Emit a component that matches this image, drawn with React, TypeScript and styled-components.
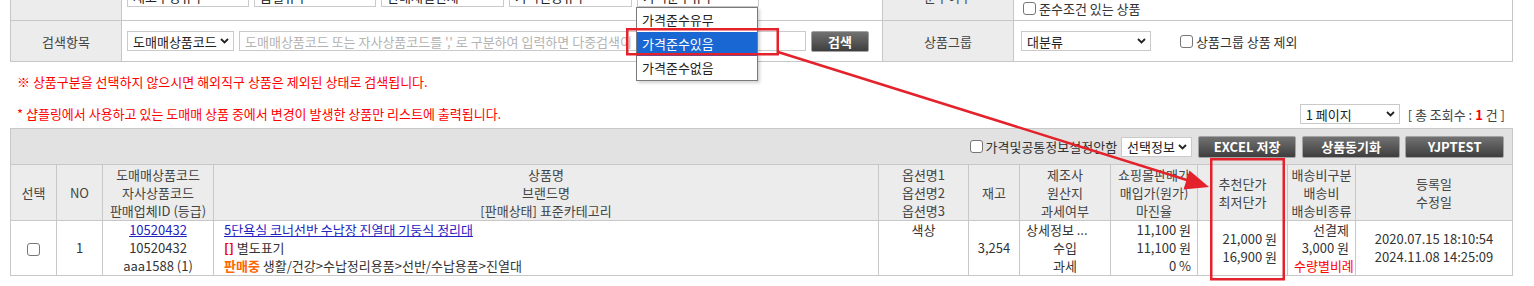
import React from 'react';
import styled, { createGlobalStyle } from 'styled-components';

const GlobalStyle = createGlobalStyle`
  html, body {
    margin: 0;
    padding: 0;
    background: #fff;
  }
  body {
    width: 1534px;
    height: 286px;
    overflow: hidden;
    font-family: 'Noto Sans CJK KR', 'Noto Sans', sans-serif;
    font-size: 13px;
    color: #333;
  }
`;

const Viewport = styled.div`
  position: relative;
  width: 1534px;
  height: 286px;
  overflow: hidden;
`;

const Sheet = styled.div`
  width: 1502px;
  margin: -28px 0 0 10px;
`;

// 검색 조건 테이블
const SearchTable = styled.table`
  width: 1502px;
  border-collapse: collapse;
  table-layout: fixed;
`;

const SizedRow = styled.tr<{ $h: number }>`
  height: ${p => p.$h}px;
`;

const LabelCell = styled.th`
  padding: 0;
  background: #ececec;
  border: 1px solid #c6c6c6;
  font-weight: 400;
  color: #444;
  text-align: center;
`;

const FieldCell = styled.td<{ $pl?: number }>`
  padding: 0 0 0 ${p => p.$pl ?? 5}px;
  border: 1px solid #c6c6c6;
`;

const FieldRow = styled.div<{ $gap: number }>`
  display: flex;
  align-items: center;
  gap: ${p => p.$gap}px;
`;

const FieldStack = styled.div`
  display: flex;
  flex-direction: column;
  gap: 4px;
`;

const SelectBox = styled.div<{ $w: number }>`
  box-sizing: border-box;
  display: flex;
  align-items: center;
  justify-content: space-between;
  gap: 2px;
  width: ${p => p.$w}px;
  height: 20px;
  padding: 0 4px 0 5px;
  border: 1px solid #cacaca;
  background: #fff;
  color: #222;
  white-space: nowrap;
  flex-shrink: 0;
`;

const SelectText = styled.span`
  overflow: hidden;
  min-width: 0;
`;

const ChevronIcon = styled.svg`
  flex-shrink: 0;
`;

const TextInput = styled.input<{ $w: number }>`
  box-sizing: border-box;
  width: ${p => p.$w}px;
  height: 20px;
  margin: 0;
  padding: 0 5px;
  border: 1px solid #cacaca;
  font-family: inherit;
  font-size: 13px;
  color: #333;
  outline: none;
  &::placeholder {
    color: #b3b3b3;
  }
`;

const DarkButton = styled.button<{ $w: number; $h: number }>`
  box-sizing: border-box;
  width: ${p => p.$w}px;
  height: ${p => p.$h}px;
  padding: 0;
  border: 1px solid #a3a3a3;
  border-radius: 2px;
  background: linear-gradient(#727272, #3e3e3e);
  color: #fff;
  font-family: inherit;
  font-size: 13px;
  font-weight: 700;
  flex-shrink: 0;
`;

const Checkbox = styled.input.attrs({ type: 'checkbox' })`
  appearance: none;
  box-sizing: border-box;
  width: 13px;
  height: 13px;
  margin: 0;
  border: 1px solid #767676;
  border-radius: 3px;
  background: #fff;
  flex-shrink: 0;
  vertical-align: middle;
`;

const CheckLabel = styled.label`
  display: inline-flex;
  align-items: center;
  gap: 3px;
  white-space: nowrap;
  color: #333;
`;

// 드롭다운 (열린 상태)
const OptionList = styled.ul`
  position: absolute;
  top: 7px;
  left: 636px;
  z-index: 5;
  box-sizing: border-box;
  width: 122px;
  margin: 0;
  padding: 0;
  list-style: none;
  background: #fff;
  border: 1px solid #7a7a7a;
  box-shadow: 2px 2px 3px rgba(0, 0, 0, 0.18);
`;

const OptionItem = styled.li<{ $active?: boolean }>`
  height: 24px;
  line-height: 24px;
  padding-left: 5px;
  background: ${p => (p.$active ? '#1967d2' : '#fff')};
  color: ${p => (p.$active ? '#fff' : '#222')};
`;

// 안내 문구
const Notice = styled.div`
  padding-left: 7px;
  line-height: 18px;
  color: #f00;
`;

const NoticeBlock = styled.div`
  margin-top: 11px;
`;

const ListHeader = styled.div`
  display: flex;
  align-items: center;
  justify-content: space-between;
  height: 20px;
  margin-top: 13px;
  padding-right: 7px;
`;

const PageInfo = styled.div`
  display: flex;
  align-items: center;
  gap: 8px;
`;

const TotalText = styled.span`
  color: #444;
  white-space: nowrap;
`;

const RedNum = styled.b`
  color: #f00;
`;

// 상품 리스트 테이블
const ListTable = styled.table`
  width: 1502px;
  margin-top: 4px;
  border-collapse: collapse;
  table-layout: fixed;
`;

const ToolbarCell = styled.td`
  height: 35px;
  padding: 0 8px 0 0;
  background: #e2e2e2;
  border: 1px solid #c8c8c8;
`;

const Toolbar = styled.div`
  display: flex;
  align-items: center;
  justify-content: flex-end;
`;

const ToolGap = styled.span<{ $w: number }>`
  display: inline-block;
  width: ${p => p.$w}px;
`;

const HeadCell = styled.th`
  height: 55px;
  padding: 0 2px;
  background: #ececec;
  border: 1px solid #c8c8c8;
  font-weight: 400;
  color: #444;
  line-height: 18px;
  text-align: center;
  white-space: nowrap;
`;

const BodyCell = styled.td<{ $align?: 'left' | 'center' | 'right'; $pl?: number; $pr?: number; $valign?: string }>`
  height: 54px;
  padding: 0 ${p => p.$pr ?? 6}px 0 ${p => p.$pl ?? 6}px;
  border: 1px solid #c8c8c8;
  line-height: 18px;
  text-align: ${p => p.$align ?? 'center'};
  vertical-align: ${p => p.$valign ?? 'middle'};
  white-space: nowrap;
  overflow: hidden;
  color: #333;
`;

const Line = styled.div<{ $align?: string }>`
  min-height: 18px;
  text-align: ${p => p.$align ?? 'inherit'};
`;

const ItemLink = styled.a`
  color: #2323c2;
  text-decoration: underline;
`;

const Bracket = styled.b`
  color: #e00;
`;

const StatusText = styled.b`
  color: #f60;
`;

const RedText = styled.span`
  color: #f00;
`;

const Annotation = styled.svg`
  position: absolute;
  top: 0;
  left: 0;
  z-index: 10;
  pointer-events: none;
`;

const Chevron = () => (
  <ChevronIcon width="9" height="6" viewBox="0 0 9 6">
    <path d="M1 1 L4.5 4.5 L8 1" fill="none" stroke="#222" strokeWidth="1.8" />
  </ChevronIcon>
);

const Select: React.FC<{ w: number; text: string }> = ({ w, text }) => (
  <SelectBox $w={w}>
    <SelectText>{text}</SelectText>
    <Chevron />
  </SelectBox>
);

const colWidths = [46, 46, 111, 665, 90, 51, 91, 87, 90, 68, 157];

const headers = [
  ['선택'],
  ['NO'],
  ['도매매상품코드', '자사상품코드', '판매업체ID (등급)'],
  ['상품명', '브랜드명', '[판매상태] 표준카테고리'],
  ['옵션명1', '옵션명2', '옵션명3'],
  ['재고'],
  ['제조사', '원산지', '과세여부'],
  ['쇼핑몰판매가', '매입가(원가)', '마진율'],
  ['추천단가', '최저단가'],
  ['배송비구분', '배송비', '배송비종류'],
  ['등록일', '수정일'],
];

const App: React.FC = () => {
  return (
    <Viewport>
      <GlobalStyle />
      <Sheet>
        <SearchTable>
          <colgroup>
            <col style={{ width: 111 }} />
            <col style={{ width: 761 }} />
            <col style={{ width: 131 }} />
            <col style={{ width: 499 }} />
          </colgroup>
          <tbody>
            <SizedRow $h={48}>
              <LabelCell />
              <FieldCell>
                <FieldRow $gap={5}>
                  <Select w={122} text="재고수량유무" />
                  <Select w={122} text="품절유무" />
                  <Select w={123} text="판매채널전체" />
                  <Select w={123} text="가격변동유무" />
                  <Select w={122} text="가격준수유무" />
                </FieldRow>
              </FieldCell>
              <LabelCell>준수여부</LabelCell>
              <FieldCell $pl={9}>
                <FieldStack>
                  <Select w={130} text="전체" />
                  <CheckLabel>
                    <Checkbox />
                    준수조건 있는 상품
                  </CheckLabel>
                </FieldStack>
              </FieldCell>
            </SizedRow>
            <SizedRow $h={41}>
              <LabelCell>검색항목</LabelCell>
              <FieldCell>
                <FieldRow $gap={5}>
                  <Select w={107} text="도매매상품코드" />
                  <TextInput
                    $w={567}
                    placeholder="도매매상품코드 또는 자사상품코드를 ',' 로 구분하여 입력하면 다중검색이 가능합니다"
                  />
                  <DarkButton $w={58} $h={21}>검색</DarkButton>
                </FieldRow>
              </FieldCell>
              <LabelCell>상품그룹</LabelCell>
              <FieldCell $pl={7}>
                <FieldRow $gap={29}>
                  <Select w={130} text="대분류" />
                  <CheckLabel>
                    <Checkbox />
                    상품그룹 상품 제외
                  </CheckLabel>
                </FieldRow>
              </FieldCell>
            </SizedRow>
          </tbody>
        </SearchTable>

        <NoticeBlock>
          <Notice>※ 상품구분을 선택하지 않으시면 해외직구 상품은 제외된 상태로 검색됩니다.</Notice>
        </NoticeBlock>

        <ListHeader>
          <Notice>* 샵플링에서 사용하고 있는 도매매 상품 중에서 변경이 발생한 상품만 리스트에 출력됩니다.</Notice>
          <PageInfo>
            <Select w={100} text="1 페이지" />
            <TotalText>
              [ 총 조회수 : <RedNum>1</RedNum> 건 ]
            </TotalText>
          </PageInfo>
        </ListHeader>

        <ListTable>
          <colgroup>
            {colWidths.map((w, i) => (
              <col key={i} style={{ width: w }} />
            ))}
          </colgroup>
          <tbody>
            <tr>
              <ToolbarCell colSpan={11}>
                <Toolbar>
                  <CheckLabel>
                    <Checkbox />
                    가격및공통정보설정안함
                  </CheckLabel>
                  <ToolGap $w={4} />
                  <Select w={71} text="선택정보" />
                  <ToolGap $w={6} />
                  <DarkButton $w={98} $h={22}>EXCEL 저장</DarkButton>
                  <ToolGap $w={6} />
                  <DarkButton $w={98} $h={22}>상품동기화</DarkButton>
                  <ToolGap $w={5} />
                  <DarkButton $w={99} $h={22}>YJPTEST</DarkButton>
                </Toolbar>
              </ToolbarCell>
            </tr>
            <tr>
              {headers.map((lines, i) => (
                <HeadCell key={i}>
                  {lines.map(l => (
                    <Line key={l}>{l}</Line>
                  ))}
                </HeadCell>
              ))}
            </tr>
            <tr>
              <BodyCell>
                <Checkbox />
              </BodyCell>
              <BodyCell>1</BodyCell>
              <BodyCell>
                <Line><ItemLink>10520432</ItemLink></Line>
                <Line>10520432</Line>
                <Line>aaa1588 (1)</Line>
              </BodyCell>
              <BodyCell $align="left" $pl={10}>
                <Line><ItemLink>5단욕실 코너선반 수납장 진열대 기둥식 정리대</ItemLink></Line>
                <Line><Bracket>[]</Bracket> 별도표기</Line>
                <Line><StatusText>판매중</StatusText> 생활/건강&gt;수납정리용품&gt;선반/수납용품&gt;진열대</Line>
              </BodyCell>
              <BodyCell $valign="top">색상</BodyCell>
              <BodyCell>3,254</BodyCell>
              <BodyCell>
                <Line $align="left">상세정보 ...</Line>
                <Line>수입</Line>
                <Line>과세</Line>
              </BodyCell>
              <BodyCell $align="right">
                <Line>11,100 원</Line>
                <Line>11,100 원</Line>
                <Line>0 %</Line>
              </BodyCell>
              <BodyCell $align="right" $pr={10}>
                <Line>21,000 원</Line>
                <Line>16,900 원</Line>
              </BodyCell>
              <BodyCell $align="right">
                <Line>선결제</Line>
                <Line>3,000 원</Line>
                <Line><RedText>수량별비례</RedText></Line>
              </BodyCell>
              <BodyCell>
                <Line>2020.07.15 18:10:54</Line>
                <Line>2024.11.08 14:25:09</Line>
              </BodyCell>
            </tr>
          </tbody>
        </ListTable>
      </Sheet>

      <OptionList>
        <OptionItem>가격준수유무</OptionItem>
        <OptionItem $active>가격준수있음</OptionItem>
        <OptionItem>가격준수없음</OptionItem>
      </OptionList>

      <Annotation width="1534" height="286" viewBox="0 0 1534 286">
        <rect x="627.25" y="29.25" width="150.5" height="25" fill="none" stroke="#e3222b" strokeWidth="2.5" />
        <rect x="1211.25" y="159.25" width="72.5" height="120" fill="none" stroke="#e3222b" strokeWidth="2.5" />
        <line x1="778" y1="52" x2="1190" y2="181" stroke="#e3222b" strokeWidth="2.5" />
        <polygon points="1209,187 1189.5,170.5 1183.5,189.5" fill="#e3222b" />
      </Annotation>
    </Viewport>
  );
};

export default App;
